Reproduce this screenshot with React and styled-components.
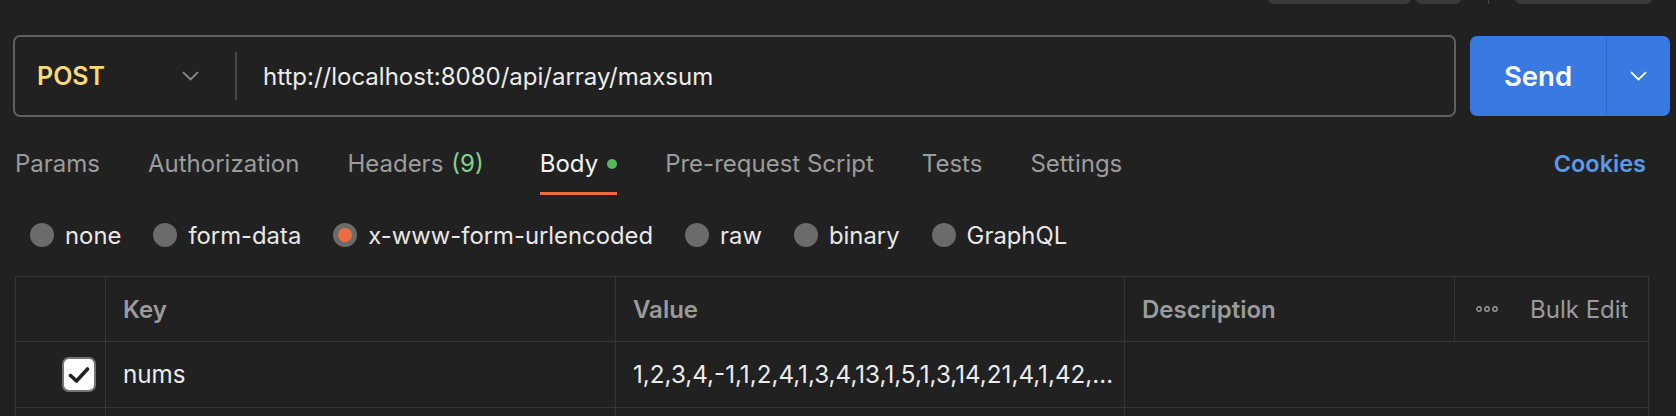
import React from "react";
import styled, { createGlobalStyle } from "styled-components";

const GlobalStyle = createGlobalStyle`
	html, body {
		margin: 0;
		background: #212121;
		overflow: hidden;
	}
	body {
		font-family: Inter, "Noto Sans", sans-serif;
		color: #e8e8e8;
	}
`;

const tabs = [
	{ label: "Params" },
	{ label: "Authorization" },
	{ label: "Headers", count: 9 },
	{ label: "Body", dot: true, active: true },
	{ label: "Pre-request Script" },
	{ label: "Tests" },
	{ label: "Settings" },
];

const bodyTypes = [
	{ label: "none" },
	{ label: "form-data" },
	{ label: "x-www-form-urlencoded", checked: true },
	{ label: "raw" },
	{ label: "binary" },
	{ label: "GraphQL" },
];

const Chevron = ({ color }) => (
	<svg width="17" height="10" viewBox="0 0 17 10" fill="none">
		<path d="M1 1.2L8.5 8.5L16 1.2" stroke={color} strokeWidth="1.8" />
	</svg>
);

const App = () => {
	return (
		<Page>
			<GlobalStyle />
			<TopBar>
				<TopButton $w={143} />
				<TopButton $w={45} />
				<TopDivider />
				<TopButton $w={137} />
			</TopBar>

			<RequestRow>
				<UrlBox>
					<MethodSelect>
						<Method>POST</Method>
						<Chevron color="#8a8a8a" />
					</MethodSelect>
					<UrlDivider />
					<UrlText>http://localhost:8080/api/array/maxsum</UrlText>
				</UrlBox>
				<SendGroup>
					<SendMain>Send</SendMain>
					<SendMore>
						<Chevron color="#ffffff" />
					</SendMore>
				</SendGroup>
			</RequestRow>

			<TabBar>
				{tabs.map((t) => (
					<Tab key={t.label} $active={t.active}>
						{t.label}
						{t.count !== undefined && <Count>({t.count})</Count>}
						{t.dot && <Dot />}
					</Tab>
				))}
				<Cookies>Cookies</Cookies>
			</TabBar>

			<RadioRow>
				{bodyTypes.map((b) => (
					<RadioItem key={b.label}>
						<Radio $checked={b.checked} />
						{b.label}
					</RadioItem>
				))}
			</RadioRow>

			<Table>
				<Cell />
				<Cell>
					<HeadText>Key</HeadText>
				</Cell>
				<Cell>
					<HeadText>Value</HeadText>
				</Cell>
				<Cell>
					<HeadText>Description</HeadText>
				</Cell>
				<Cell>
					<BulkEdit>
						<svg width="22" height="6" viewBox="0 0 22 6">
							{[3, 11, 19].map((cx) => (
								<circle key={cx} cx={cx} cy="3" r="2.2" fill="none" stroke="#9a9a9a" strokeWidth="1.4" />
							))}
						</svg>
						Bulk Edit
					</BulkEdit>
				</Cell>

				<Cell $check>
					<Checkbox>
						<svg width="22" height="18" viewBox="0 0 22 18">
							<path d="M2.5 9.5L8.5 15L19.5 3" fill="none" stroke="#232323" strokeWidth="3.6" strokeLinecap="round" strokeLinejoin="round" />
						</svg>
					</Checkbox>
				</Cell>
				<Cell>
					<CellText>nums</CellText>
				</Cell>
				<Cell>
					<CellText>1,2,3,4,-1,1,2,4,1,3,4,13,1,5,1,3,14,21,4,1,42,…</CellText>
				</Cell>
				<Cell $merge />
				<Cell />

				<Cell />
				<Cell />
				<Cell />
				<Cell $merge />
				<Cell />
			</Table>
		</Page>
	);
};

export default App;

const Page = styled.div`
	width: 1676px;
	height: 416px;
	overflow: hidden;
`;

const TopBar = styled.div`
	height: 4px;
	display: flex;
	align-items: flex-end;
	gap: 5px;
	padding-left: 1268px;
	overflow: hidden;
`;

const TopButton = styled.div`
	width: ${({ $w }) => $w}px;
	height: 30px;
	flex: none;
	border-radius: 6px;
	background: #3a3a3a;
`;

const TopDivider = styled.div`
	width: 1px;
	height: 4px;
	margin: 0 21px 0 22px;
	background: #4a4a4a;
`;

const RequestRow = styled.div`
	display: flex;
	align-items: center;
	gap: 14px;
	margin-top: 31px;
	padding: 0 6px 0 13px;
`;

const UrlBox = styled.div`
	flex: 1;
	height: 82px;
	box-sizing: border-box;
	display: flex;
	align-items: center;
	border: 2px solid #5f5f5f;
	border-radius: 7px;
`;

const MethodSelect = styled.div`
	width: 220px;
	box-sizing: border-box;
	display: flex;
	align-items: center;
	justify-content: space-between;
	padding: 0 36px 0 22px;
`;

const Method = styled.span`
	font-size: 25px;
	font-weight: 600;
	color: #f7d978;
`;

const UrlDivider = styled.div`
	width: 2px;
	height: 48px;
	background: #474747;
`;

const UrlText = styled.div`
	padding-left: 26px;
	font-size: 24px;
	color: #ececec;
`;

const SendGroup = styled.div`
	width: 200px;
	height: 80px;
	display: flex;
	border-radius: 7px;
	overflow: hidden;
	background: #3879e2;
`;

const SendMain = styled.div`
	width: 136px;
	display: flex;
	align-items: center;
	justify-content: center;
	font-size: 27.5px;
	font-weight: 600;
	color: #ffffff;
	border-right: 1px solid #2f69c6;
`;

const SendMore = styled.div`
	flex: 1;
	display: flex;
	align-items: center;
	justify-content: center;
`;

const TabBar = styled.div`
	display: flex;
	gap: 48px;
	margin-top: 18px;
	padding: 0 30px 0 15px;
`;

const Tab = styled.div`
	height: 57px;
	display: flex;
	align-items: center;
	gap: 8px;
	font-size: 24px;
	color: ${({ $active }) => ($active ? "#f2f2f2" : "#9c9c9c")};
	border-bottom: 3px solid ${({ $active }) => ($active ? "#ee6d3e" : "transparent")};
`;

const Count = styled.span`
	padding-right: 8px;
	color: #7fd48e;
`;

const Dot = styled.span`
	width: 10px;
	height: 10px;
	margin-left: 1px;
	border-radius: 50%;
	background: #57b65d;
`;

const Cookies = styled.div`
	margin-left: auto;
	display: flex;
	align-items: center;
	height: 57px;
	font-size: 23.5px;
	font-weight: 600;
	color: #5a9ae8;
`;

const RadioRow = styled.div`
	display: flex;
	align-items: center;
	gap: 32px;
	height: 40px;
	margin-top: 20px;
	padding-left: 30px;
`;

const RadioItem = styled.label`
	display: flex;
	align-items: center;
	gap: 11px;
	font-size: 23.85px;
	color: #e8e8e8;
`;

const Radio = styled.span`
	width: 24px;
	height: 24px;
	box-sizing: border-box;
	border-radius: 50%;
	background: ${({ $checked }) => ($checked ? "#ee6d3e" : "#6b6b6b")};
	border: ${({ $checked }) => ($checked ? "5px solid #6b6b6b" : "none")};
`;

const Table = styled.div`
	display: grid;
	grid-template-columns: 90px 510px 509px 330px 194px;
	grid-template-rows: 65px 66px 40px;
	margin: 21px 0 0 15px;
	width: 1634px;
	border-top: 1px solid #363636;
	border-left: 1px solid #363636;
`;

const Cell = styled.div`
	display: flex;
	align-items: center;
	justify-content: ${({ $check }) => ($check ? "flex-end" : "flex-start")};
	padding: ${({ $check }) => ($check ? "0 9px 0 0" : "0 0 0 17px")};
	min-width: 0;
	border-right: 1px solid ${({ $merge }) => ($merge ? "transparent" : "#363636")};
	border-bottom: 1px solid #363636;
`;

const HeadText = styled.span`
	font-size: 24px;
	font-weight: 600;
	color: #9b9b9b;
`;

const CellText = styled.span`
	font-size: 24.2px;
	color: #ececec;
	white-space: nowrap;
	overflow: hidden;
	text-overflow: ellipsis;
`;

const BulkEdit = styled.div`
	display: flex;
	align-items: center;
	gap: 32px;
	padding-left: 4px;
	font-size: 24px;
	color: #9b9b9b;
`;

const Checkbox = styled.span`
	width: 34px;
	height: 35px;
	box-sizing: border-box;
	display: flex;
	align-items: center;
	justify-content: center;
	border: 2px solid #747474;
	border-radius: 7px;
	background: #ffffff;
`;
